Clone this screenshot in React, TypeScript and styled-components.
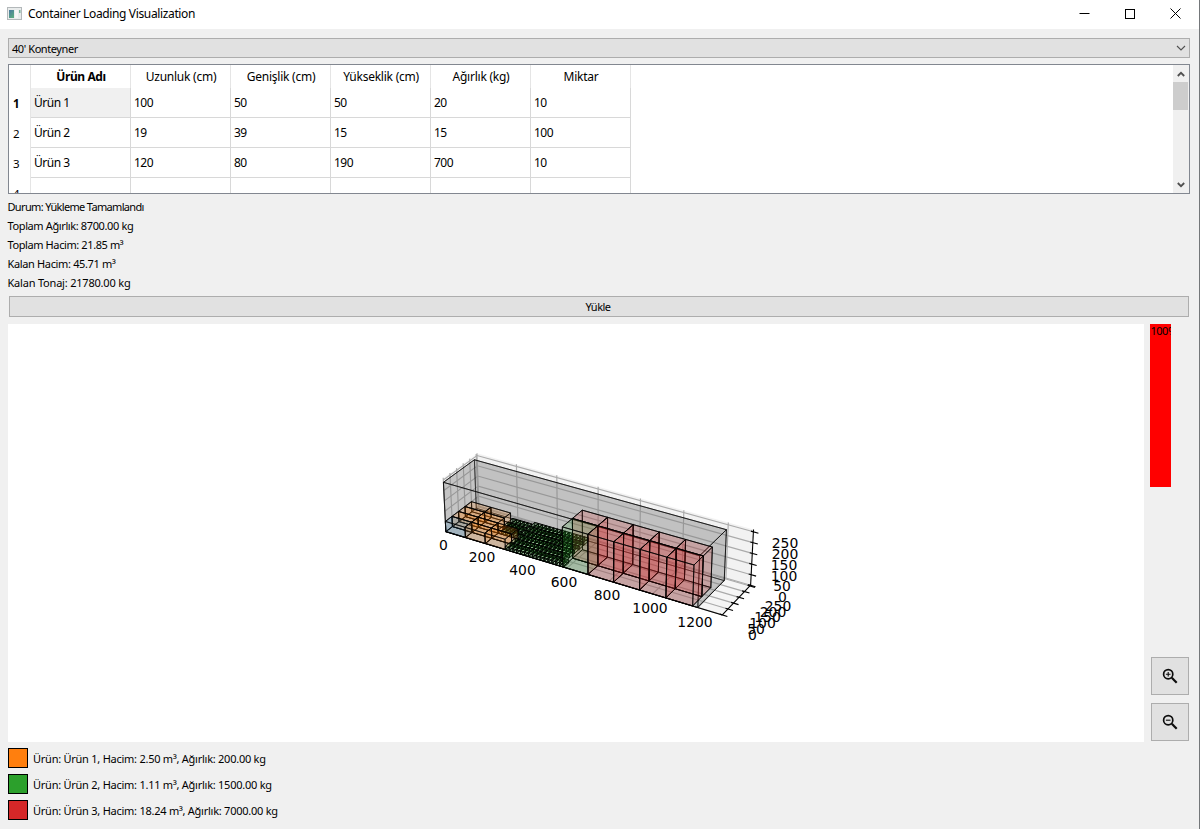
import React from "react";
import styled, { createGlobalStyle } from "styled-components";

const GlobalStyle = createGlobalStyle`
  * { box-sizing: border-box; }
  html, body { margin: 0; padding: 0; overflow: hidden; }
`;

const UI_FONT = `"Noto Sans", "Open Sans", sans-serif`;

const Window = styled.div`
  width: 1200px;
  height: 829px;
  display: flex;
  flex-direction: column;
  background: #f0f0f0;
  border-right: 1px solid #74777a;
  color: #000;
  font-family: ${UI_FONT};
  font-size: 11px;
  overflow: hidden;
`;

const TitleBar = styled.header`
  height: 29px;
  flex: none;
  display: flex;
  align-items: center;
  padding: 0 1px 2px 7px;
  background: #fff;
`;

const Title = styled.h1`
  flex: 1;
  margin: 1px 0 0 6px;
  font-size: 12px;
  font-weight: 400;
  line-height: 18px;
  letter-spacing: -0.36px;
`;

const Caption = styled.span`
  width: 45.5px;
  display: flex;
  justify-content: center;
`;

const Body = styled.main`
  flex: 1;
  display: flex;
  flex-direction: column;
  padding: 9px 9px 0 8px;
`;

const Combo = styled.div`
  height: 20px;
  flex: none;
  display: flex;
  align-items: center;
  justify-content: space-between;
  padding: 0 3px 0 3px;
  border: 1px solid #adadad;
  background: #e1e1e1;
  letter-spacing: -0.42px;
`;

const TableFrame = styled.div`
  height: 130px;
  flex: none;
  margin-top: 6px;
  display: flex;
  border: 1px solid #828790;
  background: #fff;
  overflow: hidden;
`;

const Grid = styled.div`
  display: grid;
  grid-template-columns: 22px repeat(6, 100px);
  grid-template-rows: 23px repeat(4, 30px);
  flex: 1;
`;

const HeadCell = styled.div<{ $bold?: boolean }>`
  display: flex;
  align-items: center;
  justify-content: center;
  padding-left: 1px;
  border-right: 1px solid #e5e5e5;
  font-size: 12px;
  font-weight: ${(p) => (p.$bold ? 700 : 400)};
  letter-spacing: ${(p) => (p.$bold ? "-0.4px" : "-0.24px")};
`;

const RowHead = styled.div<{ $bold?: boolean }>`
  display: flex;
  align-items: center;
  padding: 0 0 0 4px;
  border-right: 1px solid #e5e5e5;
  font-size: 11.5px;
  font-weight: ${(p) => (p.$bold ? 700 : 400)};
`;

const Cell = styled.div<{ $selected?: boolean }>`
  display: flex;
  align-items: center;
  padding: 0 0 0 3px;
  border-right: 1px solid #d8d8d8;
  border-bottom: 1px solid #d8d8d8;
  background: ${(p) => (p.$selected ? "#f0f0f0" : "#fff")};
  font-size: 12px;
  letter-spacing: -0.5px;
`;

const ScrollBar = styled.div`
  width: 16px;
  display: flex;
  flex-direction: column;
  align-items: center;
  justify-content: space-between;
  background: #f0f0f0;
  padding-right: 1px;
`;

const ScrollTop = styled.div`
  width: 15px;
  display: flex;
  flex-direction: column;
  align-items: center;
`;

const ScrollArrow = styled.div`
  height: 17px;
  display: flex;
  align-items: center;
`;

const Thumb = styled.div`
  width: 15px;
  height: 28px;
  background: #cdcdcd;
`;

const Stats = styled.div`
  display: flex;
  flex-direction: column;
  margin: 3px 0 1px -0.5px;
`;

const Stat = styled.div<{ $track: number }>`
  height: 19px;
  line-height: 19px;
  letter-spacing: ${(p) => p.$track}px;
  white-space: nowrap;
`;

const LoadButton = styled.button`
  height: 21px;
  flex: none;
  margin: 3px 1px 0;
  padding: 0 2px 0 0;
  border: 1px solid #adadad;
  background: #e1e1e1;
  font: 11px/19px ${UI_FONT};
  letter-spacing: -0.5px;
  color: #000;
`;

const Stage = styled.div`
  height: 418px;
  flex: none;
  display: flex;
  margin-top: 7px;
`;

const Canvas = styled.div`
  width: 1136px;
  background: #fff;
`;

const Side = styled.aside`
  flex: 1;
  display: flex;
  flex-direction: column;
  padding: 0 1px 1px 7px;
`;

const Gauge = styled.div`
  width: 21px;
  height: 163px;
  margin-left: -1px;
  padding-left: 0.5px;
  background: #f00;
  overflow: hidden;
  line-height: 14px;
  letter-spacing: -0.5px;
  white-space: nowrap;
`;

const ZoomButtons = styled.div`
  margin-top: auto;
  display: flex;
  flex-direction: column;
  gap: 8px;
`;

const ZoomButton = styled.button`
  width: 38px;
  height: 38px;
  padding: 0 1px 1px 0;
  display: flex;
  align-items: center;
  justify-content: center;
  border: 1px solid #adadad;
  background: #e1e1e1;
`;

const Legend = styled.div`
  display: flex;
  flex-direction: column;
  gap: 6px;
  margin-top: 6px;
`;

const LegendRow = styled.div`
  height: 20px;
  display: flex;
  align-items: center;
  gap: 5px;
  letter-spacing: -0.25px;
  white-space: nowrap;
`;

const Swatch = styled.span<{ $color: string }>`
  width: 20px;
  height: 20px;
  border: 1px solid #000;
  background: ${(p) => p.$color};
`;

/* ---------- 3D plot ---------- */

type V3 = [number, number, number];

const SIZE: V3 = [1203, 235, 239];
const LIM: V3 = [SIZE[0] * 1.09, SIZE[1] * 1.09, SIZE[2] * 1.09];
const UNIT = 1.9057 / Math.hypot(SIZE[0] * 1.1, SIZE[1] * 1.1, SIZE[2] * 1.1);

// Perspective camera at azimuth -60, elevation 30, distance 10.
const project = (x: number, y: number, z: number): [number, number] => {
  const a = (x - SIZE[0] * 0.55) * UNIT;
  const b = (y - SIZE[1] * 0.55) * UNIT;
  const c = (z - SIZE[2] * 0.55) * UNIT;
  const u = 0.866 * a + 0.5 * b;
  const v = -0.25 * a + 0.433 * b + 0.866 * c;
  const n = 0.433 * a - 0.75 * b + 0.5 * c;
  const f = 10 / (10 - n);
  return [595.7 + 175.4 * u * f - 8, 530.6 - 175.0 * v * f - 324];
};

const pts = (...v: V3[]) =>
  v.map((p) => project(...p).map((n) => n.toFixed(2)).join(",")).join(" ");

const faces = (o: V3, s: V3): string[] => {
  const [x, y, z] = o;
  const [X, Y, Z] = [x + s[0], y + s[1], z + s[2]];
  return [
    pts([x, y, z], [X, y, z], [X, Y, z], [x, Y, z]),
    pts([x, Y, z], [X, Y, z], [X, Y, Z], [x, Y, Z]),
    pts([x, y, z], [x, Y, z], [x, Y, Z], [x, y, Z]),
    pts([X, y, z], [X, Y, z], [X, Y, Z], [X, y, Z]),
    pts([x, y, Z], [X, y, Z], [X, Y, Z], [x, Y, Z]),
    pts([x, y, z], [X, y, z], [X, y, Z], [x, y, Z]),
  ];
};

const BLUE = "#1f77b4";
const ORANGE = "#ff7f0e";
const GREEN = "#2ca02c";
const RED = "#d62728";

interface Item {
  o: V3;
  s: V3;
  color: string;
  line: number;
}

const items: Item[] = [];
for (let i = 0; i < 10; i++) {
  items.push({
    o: [Math.floor(i / 4) * 100, (i % 4) * 50, 0],
    s: [100, 50, 50],
    color: i ? ORANGE : BLUE,
    line: 0.7,
  });
}
const small: V3[] = [];
for (let c = 0; c < 5; c++) for (let r = 0; r < 3; r++) small.push([200 + c * 19, 100 + r * 39, 0]);
for (let c = 0; c < 15; c++) for (let r = 0; r < 6; r++) if (small.length < 100) small.push([300 + c * 19, r * 39, 0]);
small.forEach((o, i) => items.push({ o, s: [19, 39, 15], color: i ? GREEN : ORANGE, line: 0.65 }));
for (let i = 0; i < 10; i++) {
  items.push({
    o: [580 + Math.floor(i / 2) * 120, (i % 2) * 80, 0],
    s: [120, 80, 190],
    color: i ? RED : GREEN,
    line: 0.75,
  });
}
items.sort((p, q) => q.o[1] - p.o[1] || p.o[0] - q.o[0]);

const Segment = ({ a, b, ...rest }: { a: V3; b: V3 } & React.SVGProps<SVGPolylineElement>) => (
  <polyline points={pts(a, b)} fill="none" {...rest} />
);

const X_TICKS = [0, 200, 400, 600, 800, 1000, 1200];
const YZ_TICKS = [0, 50, 100, 150, 200, 250];

const LABELS: [string, number, number][] = [
  ["0", 443.3, 545.5], ["200", 482, 557.5], ["400", 522.5, 570.5], ["600", 564, 582.5],
  ["800", 607, 595.5], ["1000", 650, 608.5], ["1200", 695, 622.5],
  ["0", 752.5, 635], ["50", 756, 629], ["100", 762.5, 623], ["150", 767.5, 617.5],
  ["200", 773, 612], ["250", 778, 606.5],
  ["0", 782.5, 597.5], ["50", 782, 586.5], ["100", 784, 576], ["150", 784, 565],
  ["200", 785, 554.5], ["250", 785, 543.5],
];

const Plot = () => {
  const [LX, LY, LZ] = LIM;
  return (
    <svg width="1136" height="418" viewBox="0 0 1136 418" fontFamily="DejaVu Sans, sans-serif" fontSize="13.9">
      <polygon points={pts([0, 0, 0], [0, LY, 0], [0, LY, LZ], [0, 0, LZ])} fill="#f2f2f2" fillOpacity="0.5" />
      <polygon points={pts([0, LY, 0], [LX, LY, 0], [LX, LY, LZ], [0, LY, LZ])} fill="#e6e6e6" fillOpacity="0.5" />
      <polygon points={pts([0, 0, 0], [LX, 0, 0], [LX, LY, 0], [0, LY, 0])} fill="#ececec" fillOpacity="0.5" />
      <g stroke="#aaaaaa" strokeWidth="1.15">
        {X_TICKS.map((t) => (
          <polyline key={t} fill="none" points={pts([t, 0, 0], [t, LY, 0], [t, LY, LZ])} />
        ))}
        {YZ_TICKS.map((t) => (
          <polyline key={`y${t}`} fill="none" points={pts([LX, t, 0], [0, t, 0], [0, t, LZ])} />
        ))}
        {YZ_TICKS.map((t) => (
          <polyline key={`z${t}`} fill="none" points={pts([0, 0, t], [0, LY, t], [LX, LY, t])} />
        ))}
      </g>
      <g stroke="#000" strokeWidth="1.1">
        <Segment a={[0, 0, 0]} b={[LX, 0, 0]} />
        <Segment a={[LX, 0, 0]} b={[LX, LY, 0]} />
        <Segment a={[LX, LY, 0]} b={[LX, LY, LZ]} />
        {YZ_TICKS.map((t) => (
          <Segment key={`y${t}`} a={[LX - 11, t, 0]} b={[LX + 22, t, 0]} />
        ))}
        {YZ_TICKS.map((t) => (
          <Segment key={`z${t}`} a={[LX - 11, LY, t]} b={[LX + 22, LY, t]} />
        ))}
      </g>
      {faces([0, 0, 0], SIZE).map((p, i) => (
        <polygon key={i} points={p} fill="#808080" fillOpacity="0.245" stroke="#000" strokeWidth="0.65" />
      ))}
      {items.map((it, k) => (
        <g key={k} fill={it.color} fillOpacity="0.1" stroke="#000" strokeWidth={it.line} strokeLinejoin="round">
          {faces(it.o, it.s).map((p, i) => (
            <polygon key={i} points={p} />
          ))}
        </g>
      ))}
      {LABELS.map(([t, x, y], i) => (
        <text key={i} x={x - 8} y={y - 324 + 4.5} textAnchor="middle">
          {t}
        </text>
      ))}
    </svg>
  );
};

/* ---------- Icons ---------- */

const AppIcon = () => (
  <svg width="15" height="13" viewBox="0 0 15 13">
    <defs>
      <linearGradient id="pane" x1="0" y1="0" x2="0.6" y2="1">
        <stop offset="0" stopColor="#4a78a0" />
        <stop offset="1" stopColor="#5aa982" />
      </linearGradient>
    </defs>
    <rect x="0.5" y="0.5" width="14" height="12" fill="#e9ecec" stroke="#b3b8ba" />
    <rect x="2" y="3" width="5" height="8" fill="url(#pane)" />
    <rect x="8" y="3" width="3" height="8" fill="#f6f6f6" />
    <rect x="12" y="3" width="1.5" height="3" fill="#79b39b" />
  </svg>
);

const Magnifier = ({ plus }: { plus?: boolean }) => (
  <svg width="16" height="16" viewBox="0 0 16 16" fill="none" stroke="#0c0c0c">
    <circle cx="6.2" cy="6.2" r="4.6" strokeWidth="1.7" />
    <path d="M9.8 9.8L14.7 14.7" strokeWidth="2.2" />
    <path d={plus ? "M3.9 6.2H8.5M6.2 3.9V8.5" : "M3.9 6.2H8.5"} strokeWidth="1.1" />
  </svg>
);

const HEADERS = ["Ürün Adı", "Uzunluk (cm)", "Genişlik (cm)", "Yükseklik (cm)", "Ağırlık (kg)", "Miktar"];
const ROWS = [
  ["Ürün 1", "100", "50", "50", "20", "10"],
  ["Ürün 2", "19", "39", "15", "15", "100"],
  ["Ürün 3", "120", "80", "190", "700", "10"],
  ["", "", "", "", "", ""],
];
const STATS: [string, number][] = [
  ["Durum: Yükleme Tamamlandı", -0.66],
  ["Toplam Ağırlık: 8700.00 kg", -0.38],
  ["Toplam Hacim: 21.85 m³", -0.4],
  ["Kalan Hacim: 45.71 m³", -0.35],
  ["Kalan Tonaj: 21780.00 kg", -0.2],
];
const LEGEND: [string, string][] = [
  ["#ff7f0e", "Ürün: Ürün 1, Hacim: 2.50 m³, Ağırlık: 200.00 kg"],
  ["#2ca02c", "Ürün: Ürün 2, Hacim: 1.11 m³, Ağırlık: 1500.00 kg"],
  ["#d62728", "Ürün: Ürün 3, Hacim: 18.24 m³, Ağırlık: 7000.00 kg"],
];

export default function App() {
  return (
    <Window>
      <GlobalStyle />
      <TitleBar>
        <AppIcon />
        <Title>Container Loading Visualization</Title>
        <Caption>
          <svg width="11" height="11"><path d="M0.5 5.5H10.5" stroke="#000" /></svg>
        </Caption>
        <Caption>
          <svg width="10" height="10" shapeRendering="crispEdges"><rect x="0.5" y="0.5" width="9" height="9" fill="none" stroke="#000" /></svg>
        </Caption>
        <Caption>
          <svg width="11" height="11"><path d="M0.5 0.5L10.5 10.5M10.5 0.5L0.5 10.5" stroke="#000" /></svg>
        </Caption>
      </TitleBar>
      <Body>
        <Combo>
          <span>40' Konteyner</span>
          <svg width="10" height="6" fill="none" stroke="#505050"><path d="M1 1L5 5L9 1" strokeWidth="1.1" /></svg>
        </Combo>
        <TableFrame>
          <Grid>
            <HeadCell />
            {HEADERS.map((h, i) => (
              <HeadCell key={h} $bold={i === 0}>{h}</HeadCell>
            ))}
            {ROWS.map((r, i) => (
              <React.Fragment key={i}>
                <RowHead $bold={i === 0}>{i + 1}</RowHead>
                {r.map((c, j) => (
                  <Cell key={j} $selected={i === 0 && j === 0}>{c}</Cell>
                ))}
              </React.Fragment>
            ))}
          </Grid>
          <ScrollBar>
            <ScrollTop>
              <ScrollArrow>
                <svg width="8" height="6" fill="none" stroke="#505050"><path d="M0.8 5L4 1.8L7.2 5" strokeWidth="1.8" /></svg>
              </ScrollArrow>
              <Thumb />
            </ScrollTop>
            <ScrollArrow>
              <svg width="8" height="6" fill="none" stroke="#505050"><path d="M0.8 1L4 4.2L7.2 1" strokeWidth="1.8" /></svg>
            </ScrollArrow>
          </ScrollBar>
        </TableFrame>
        <Stats>
          {STATS.map(([text, track]) => (
            <Stat key={text} $track={track}>{text}</Stat>
          ))}
        </Stats>
        <LoadButton>Yükle</LoadButton>
        <Stage>
          <Canvas>
            <Plot />
          </Canvas>
          <Side>
            <Gauge>100%</Gauge>
            <ZoomButtons>
              <ZoomButton aria-label="Yakınlaştır"><Magnifier plus /></ZoomButton>
              <ZoomButton aria-label="Uzaklaştır"><Magnifier /></ZoomButton>
            </ZoomButtons>
          </Side>
        </Stage>
        <Legend>
          {LEGEND.map(([color, text]) => (
            <LegendRow key={text}>
              <Swatch $color={color} />
              {text}
            </LegendRow>
          ))}
        </Legend>
      </Body>
    </Window>
  );
}
